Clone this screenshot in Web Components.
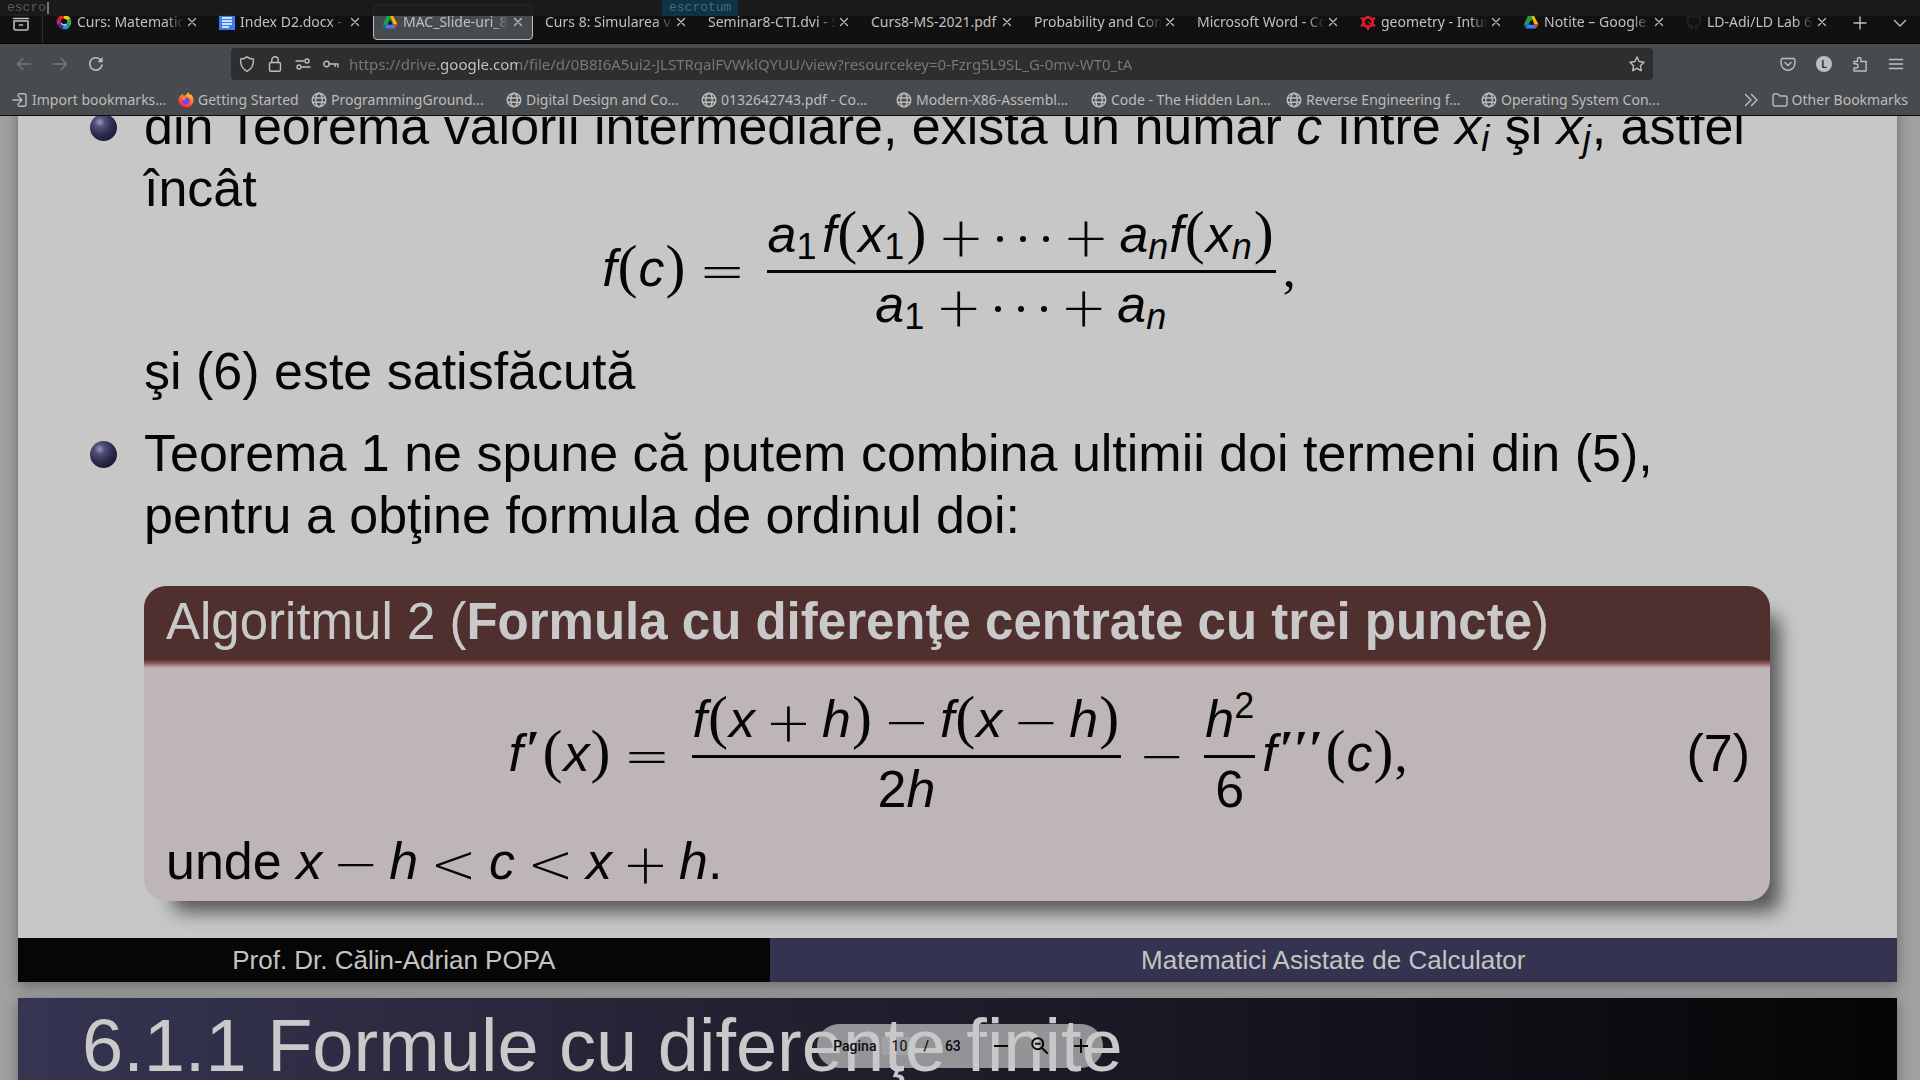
<!DOCTYPE html>
<html lang="ro">
<head>
<meta charset="utf-8">
<title>MAC_Slide-uri_8</title>
<style>
html,body{margin:0;height:100%}
body{display:flex;flex-direction:column;overflow:hidden;background:#a1a1a1;font-family:"Noto Sans",sans-serif;font-size:14px;color:#c0c0c0}
</style>
</head>
<body>
<launcher-bar></launcher-bar>
<tab-strip>
  <browser-tab icon="ring">Curs: Matematici</browser-tab>
  <browser-tab icon="doc">Index D2.docx - G</browser-tab>
  <browser-tab icon="drive" selected>MAC_Slide-uri_8</browser-tab>
  <browser-tab>Curs 8: Simularea va</browser-tab>
  <browser-tab>Seminar8-CTI.dvi - S</browser-tab>
  <browser-tab full>Curs8-MS-2021.pdf</browser-tab>
  <browser-tab>Probability and Com</browser-tab>
  <browser-tab>Microsoft Word - Co</browser-tab>
  <browser-tab icon="flower">geometry - Intuit</browser-tab>
  <browser-tab icon="drive">Notite – Google D</browser-tab>
  <browser-tab icon="github">LD-Adi/LD Lab 6</browser-tab>
</tab-strip>
<nav-bar></nav-bar>
<bookmark-bar>
  <book-mark icon="import" style="--w:166px">Import bookmarks…</book-mark>
  <book-mark icon="firefox" style="--w:133px">Getting Started</book-mark>
  <book-mark icon="globe">ProgrammingGround…</book-mark>
  <book-mark icon="globe">Digital Design and Co…</book-mark>
  <book-mark icon="globe">0132642743.pdf - Co…</book-mark>
  <book-mark icon="globe">Modern-X86-Assembl…</book-mark>
  <book-mark icon="globe">Code - The Hidden Lan…</book-mark>
  <book-mark icon="globe">Reverse Engineering f…</book-mark>
  <book-mark icon="globe">Operating System Con…</book-mark>
  <book-mark slot="end" icon="folder" style="--w:auto">Other Bookmarks</book-mark>
</bookmark-bar>
<pdf-viewer>
  <slide-page>
    <slide-item>din Teorema valorii intermediare, există un număr <i>c</i> între <i>x</i><math-sub>i</math-sub> şi <i>x</i><math-sub>j</math-sub>, astfel încât
      <math-display slot="after" class="list">
        <math-run><i>f</i><math-paren>(</math-paren><i>c</i><math-paren>)</math-paren><math-op class="rel">=</math-op></math-run>
        <math-frac>
          <math-run slot="num"><i>a</i><math-sub class="up">1</math-sub>&#8202;<i>f</i><math-paren>(</math-paren><i>x</i><math-sub class="up">1</math-sub><math-paren>)</math-paren><math-op>+</math-op><math-dots></math-dots><math-op>+</math-op><i>a</i><math-sub>n</math-sub><i>f</i><math-paren>(</math-paren><i>x</i><math-sub>n</math-sub><math-paren>)</math-paren></math-run>
          <math-run slot="den"><i>a</i><math-sub class="up">1</math-sub><math-op>+</math-op><math-dots></math-dots><math-op>+</math-op><i>a</i><math-sub>n</math-sub></math-run>
        </math-frac>
        <math-run><math-comma>,</math-comma></math-run>
      </math-display>
      <span slot="after">şi (6) este satisfăcută</span>
    </slide-item>
    <slide-item>Teorema 1 ne spune că putem combina ultimii doi termeni din (5), pentru a obţine formula de ordinul doi:</slide-item>
    <theorem-block>
      <span slot="title">Algoritmul 2 (<b>Formula cu diferenţe centrate cu trei puncte</b>)</span>
      <math-display class="block">
        <math-run><i>f</i><math-prime>′</math-prime><math-paren>(</math-paren><i>x</i><math-paren>)</math-paren><math-op class="rel">=</math-op></math-run>
        <math-frac>
          <math-run slot="num"><i>f</i><math-paren>(</math-paren><i>x</i><math-op>+</math-op><i>h</i><math-paren>)</math-paren><math-op>−</math-op><i>f</i><math-paren>(</math-paren><i>x</i><math-op>−</math-op><i>h</i><math-paren>)</math-paren></math-run>
          <math-run slot="den">2<i>h</i></math-run>
        </math-frac>
        <math-run><math-op>−</math-op></math-run>
        <math-frac>
          <math-run slot="num"><i>h</i><math-sup>2</math-sup></math-run>
          <math-run slot="den">6</math-run>
        </math-frac>
        <math-run><i>f</i><math-prime>′′′</math-prime><math-paren>(</math-paren><i>c</i><math-paren>)</math-paren><math-comma>,</math-comma></math-run>
        <math-run slot="number">(7)</math-run>
      </math-display>
      <div>unde <i>x</i><math-op>−</math-op><i>h</i><math-op class="rel">&lt;</math-op><i>c</i><math-op class="rel">&lt;</math-op><i>x</i><math-op>+</math-op><i>h</i>.</div>
    </theorem-block>
    <slide-footer slot="footer">
      <span slot="author">Prof. Dr. Călin-Adrian POPA</span>
      <span slot="course">Matematici Asistate de Calculator</span>
    </slide-footer>
  </slide-page>
  <title-page>6.1.1 Formule cu diferenţe finite</title-page>
  <page-controls slot="controls"></page-controls>
</pdf-viewer>
<script>
const svg=(w,h,vb,body)=>`<svg width="${w}" height="${h}" viewBox="${vb}" fill="none" stroke="currentColor" stroke-width="1.4" stroke-linecap="round" stroke-linejoin="round" aria-hidden="true">${body}</svg>`;
const i16=b=>svg(16,16,'0 0 16 16',b);
const ICONS={
 ring:i16('<g stroke-width="4" stroke-linecap="butt"><path stroke="#e2d211" d="M8 2.8A5.2 5.2 0 0 1 12.6 5.6"/><path stroke="#3fae49" d="M12.6 5.6A5.2 5.2 0 0 1 12.4 10.8"/><path stroke="#1a9ad6" d="M12.4 10.8A5.2 5.2 0 0 1 7 13.1"/><path stroke="#3a2f8f" d="M7 13.1A5.2 5.2 0 0 1 3.2 10"/><path stroke="#d6187c" d="M3.2 10A5.2 5.2 0 0 1 3.6 5.2"/><path stroke="#e3261f" d="M3.6 5.2A5.2 5.2 0 0 1 8 2.8"/></g><circle cx="8" cy="8" r="3.200" fill="#111" stroke="none"/><path stroke="#ddd" d="M5.500 9.500A3 3 0 0 0 10 10.200"/>'),
 doc:i16('<path fill="#3b7ded" stroke="none" d="M0 0h16v16H0z"/><path stroke="#fff" stroke-width="1.6" stroke-linecap="butt" d="M3 4h10M3 7h10M3 10h10M3 13h7"/>'),
 drive:i16('<g stroke="none"><path fill="#1e9e4a" d="M5.3 1h2.9l2 3.5L3.5 14 .8 10.500z"/><path fill="#f5b400" d="M8 1h2.700l4.800 9.500h-4.200z"/><path fill="#3b7ded" d="M4.600 10.500h7.500L13 14.500H3z"/><path fill="#e5402f" d="M11.300 10.500h4.200L13 14.500z"/><path fill="#2260c8" d="M.8 10.500h3.800L3 14.500z"/><path fill="#111" d="M8 6l2.500 4.500h-5z"/></g>'),
 flower:i16('<g stroke="#d3202a" stroke-width="2.600"><circle cx="8" cy="8" r="4.800"/><path d="M8 .9v3M8 12v3M1.900 4.500l2.600 1.500M11.500 10l2.600 1.500M1.900 11.500L4.500 10M11.500 6l2.600-1.500"/></g><path stroke="#d3202a" d="M8 8l3 2"/>'),
 github:i16('<path stroke="#1c2329" stroke-width="2" d="M6 15v-3.200C2.500 11.500 1.500 9 1.800 6.500 1.900 4 3 2 4 1.500L6 2.500h4l2-1c1 .5 2 2.500 2.200 5 .2 2.500-.7 5-4.200 5.300V15M6 13.500c-2 .5-2.500-.5-3.500-1.500"/>'),
 import:i16('<path d="M6 4V3.500A2 2 0 0 1 8 1.700h4a2 2 0 0 1 2 2v8.600a2 2 0 0 1-2 2H8a2 2 0 0 1-2-1.800V12M1 8h8.500M7 5l3 3-3 3"/>'),
 firefox:i16('<defs><linearGradient id="g" x1=".8" y1="0" x2=".2" y2="1"><stop offset="0" stop-color="#ffe226"/><stop offset=".45" stop-color="#ff7139"/><stop offset="1" stop-color="#f01361"/></linearGradient></defs><path fill="url(#g)" stroke="none" d="M11 .2c-.6 1.600.8 2.300 1.300 3.100.3-.5.200-1 .1-1.300 2 1.500 3.300 4 3.100 6.700A7.500 7.500 0 0 1 .6 9C.4 6.500 1.200 4.400 2.400 3c0 .6.100 1 .3 1.300C3.200 3 4 2 4.700 1.500c0 1 .4 1.900 1.300 2.300C8.500 3.500 8.500 1.500 11 .2z"/><circle cx="8" cy="8.800" r="3.500" fill="#7542e5" stroke="none"/><path fill="#ff9a22" stroke="none" d="M4 6c1.500-.8 3.500-.3 4.500.5-1 .2-2 .7-2 1.500-1 0-2-.6-2.500-2z"/>'),
 globe:i16('<circle cx="8" cy="8" r="6.800"/><ellipse cx="8" cy="8" rx="3.200" ry="6.800"/><path d="M1.500 6h13M1.500 10.200h13"/>'),
 folder:i16('<path d="M1 12.500v-9A1.500 1.500 0 0 1 2.500 2H6l2 2h5.500A1.500 1.500 0 0 1 15 5.500v7a1.500 1.500 0 0 1-1.500 1.500h-11A1.500 1.500 0 0 1 1 12.500z"/>'),
 x:svg(10,10,'0 0 10 10','<path stroke-width="1.200" d="M1.500 1.500l7 7M8.500 1.500l-7 7"/>'),
 vault:svg(18,18,'0 0 18 18','<path stroke-width="1.600" d="M3 1.200h12M1.500 4.500h15M2 7v7.500A1.500 1.500 0 0 0 3.500 16h11a1.500 1.500 0 0 0 1.500-1.500V7zM7.500 11h3"/>'),
 plus:svg(14,14,'0 0 14 14','<path d="M7 1v12M1 7h12"/>'),
 down:svg(14,14,'0 0 14 14','<path d="M1.500 4.500L7 10l5.500-5.500"/>'),
 back:i16('<path d="M14.500 8h-13M7 2.500L1.500 8 7 13.500"/>'),
 fwd:i16('<path d="M1.500 8h13M9 2.500L14.500 8 9 13.500"/>'),
 reload:i16('<path stroke-width="1.600" d="M14 9a6.200 6.200 0 1 1-2-5.700L13.500 5"/><path fill="currentColor" stroke="none" d="M14.600 1v5.200H9.400z"/>'),
 shield:i16('<path d="M8 .9C10 2.500 12 3 14.300 3c.6 5-1.300 9.800-6.300 12.300C3 12.800 1.100 8 1.700 3 4 3 6 2.500 8 .9z"/>'),
 lock:i16('<rect x="2.500" y="6.500" width="11" height="8.800" rx="1.500"/><path d="M4.800 6.500V4a3.200 3.200 0 0 1 6.400 0v2.500"/>'),
 perms:i16('<circle cx="12" cy="5" r="2"/><path d="M1 5h7.500M7.500 11H15"/><circle cx="4" cy="11" r="2"/>'),
 key:i16('<circle cx="3.500" cy="8" r="2.700"/><path d="M6.200 8H15v3M12 8v2.500"/>'),
 star:i16('<path d="M8 1l2.100 4.500 4.900.7-3.600 3.500.9 5L8 12.300l-4.300 2.400.9-5L1 6.200l4.900-.7z"/>'),
 pocket:i16('<path d="M2.500 2.500h11A1.300 1.300 0 0 1 14.800 4v3.500a6.800 6.800 0 0 1-13.600 0V4a1.300 1.300 0 0 1 1.300-1.500zM5 6.500l3 3 3-3"/>'),
 ext:i16('<path d="M2 7.500V5.500h3.500V3.200a1.700 1.700 0 0 1 3.400 0v2.300h5.200V15H2v-3h2a2 2 0 0 0 0-4z"/>'),
 menu:i16('<path d="M1.500 3.500h13M1.500 8h13M1.500 12.500h13"/>'),
 more:svg(14,14,'0 0 14 14','<path d="M1.500 1.500L7 7l-5.500 5.500M7.500 1.500L13 7l-5.500 5.500"/>'),
 zoomout:svg(18,18,'0 0 18 18','<g stroke-width="2" stroke-linecap="butt"><circle cx="6.700" cy="6.700" r="5.500"/><path d="M10.800 10.800l6 6M4 6.700h5.400"/></g>'),
 minus:svg(14,14,'0 0 14 14','<path stroke-width="2" stroke-linecap="butt" d="M0 7h14"/>'),
 zplus:svg(14,14,'0 0 14 14','<path stroke-width="2" stroke-linecap="butt" d="M0 7h14M7 0v14"/>')
};
const BTN='button{appearance:none;border:0;background:none;color:inherit;font:inherit;padding:0;margin:0;display:flex;align-items:center;justify-content:center}svg{display:block;flex:none}';
const define=(name,css,html)=>customElements.define(name,class extends HTMLElement{
  connectedCallback(){
    if(this.shadowRoot)return;
    const body=typeof html==='function'?html(this):html;
    this.attachShadow({mode:'open'}).innerHTML=`<style>${css}</style>${body}`;
  }
});

define('launcher-bar',`:host{position:absolute;inset:0 0 auto 0;height:16px;z-index:5;display:flex;align-items:center;background:rgba(27,27,27,.94);color:#5a5a5a;font:13px/16px "Liberation Mono",monospace}
label{display:flex;align-items:center;flex:0 0 662px;box-sizing:border-box;padding-left:7px}
input{border:0;padding:0;margin:0;background:none;color:inherit;font:inherit;width:40px;height:16px;outline:0}
.caret{width:2px;height:12px;background:#777}
output{background:#0d3344;color:#4b6975;padding:0 7px;height:16px}`,
`<label aria-label="Run"><input value="escro"><span class="caret"></span></label><output>escrotum</output>`);

define('tab-strip',BTN+`:host{display:flex;align-items:stretch;height:43px;background:#111;border-bottom:1px solid #060606;flex:none}
.vault{width:43px;border-right:1px solid #303030;padding-top:2px}
.tabs{flex:1;display:flex;padding-left:4px;min-width:0}
.end{width:80px;display:flex}.end button{flex:1;height:45px}`,
`<button class="vault" aria-label="View">${ICONS.vault}</button><div class="tabs" role="tablist"><slot></slot></div><div class="end"><button aria-label="New tab">${ICONS.plus}</button><button aria-label="List tabs">${ICONS.down}</button></div>`);

define('browser-tab',BTN+`:host{flex:1 1 0;min-width:0;display:flex;padding:4px 3px 3px 0}
.tab{flex:1;min-width:0;display:flex;align-items:center;gap:3px;padding:0 9px 0 8px;border:1px solid transparent;border-radius:4px}
:host([selected]) .tab{background:#484b4d;border-color:#bdbdbd}
.text{flex:1;min-width:0;overflow:hidden;white-space:nowrap;text-align:left;line-height:20px;-webkit-mask-image:linear-gradient(90deg,#000 calc(100% - 18px),transparent 100%)}
:host([full]) .text{-webkit-mask-image:none}
.icon{margin-right:2px}`,
el=>`<div class="tab" role="tab">${el.getAttribute('icon')?`<span class="icon">${ICONS[el.getAttribute('icon')]}</span>`:''}<span class="text"><slot></slot></span><button aria-label="Close">${ICONS.x}</button></div>`);

define('nav-bar',BTN+`:host{display:flex;align-items:center;height:40px;padding:0 6px;background:#484b4d;flex:none;color:#bebebe}
button{width:36px;height:36px}
button.off{color:#777a7c}
.url{flex:1;min-width:0;display:flex;align-items:center;height:32px;margin:0 117px;background:#2d2e30;border-radius:4px;padding:0 8px;gap:12px}
.url button{width:16px}
.url button:nth-of-type(4){margin-right:-2px}
input{flex:1;min-width:0;border:0;padding:0;margin:0;outline:0;font:inherit;font-size:15px;height:24px;color:transparent;-webkit-text-fill-color:transparent;background:linear-gradient(90deg,#77797a 89px,#c6c6c6 89px,#c6c6c6 169px,#77797a 169px);-webkit-background-clip:text;background-clip:text}
.me{width:16px;height:16px;border-radius:50%;background:#bebebe;color:#333;font-size:10px;font-weight:700;line-height:16px;text-align:center}`,
`<button class="off" aria-label="Back">${ICONS.back}</button><button class="off" aria-label="Forward">${ICONS.fwd}</button><button aria-label="Reload">${ICONS.reload}</button>
<div class="url"><button aria-label="Protection">${ICONS.shield}</button><button aria-label="Secure">${ICONS.lock}</button><button aria-label="Permissions">${ICONS.perms}</button><button aria-label="Key">${ICONS.key}</button><input aria-label="Address" value="https://drive.google.com/file/d/0B8I6A5ui2-JLSTRqalFVWklQYUU/view?resourcekey=0-Fzrg5L9SL_G-0mv-WT0_tA"><button aria-label="Bookmark">${ICONS.star}</button></div>
<button aria-label="Pocket">${ICONS.pocket}</button><button aria-label="Account"><span class="me">L</span></button><button aria-label="Extensions">${ICONS.ext}</button><button aria-label="Menu">${ICONS.menu}</button>`);

define('bookmark-bar',BTN+`:host{display:flex;align-items:center;height:31px;padding:0 12px;background:#484b4d;border-bottom:1px solid #0c0c0c;flex:none}
nav{display:flex;flex:1;min-width:0}
button{margin-right:14px}`,
`<nav><slot></slot></nav><button aria-label="More">${ICONS.more}</button><slot name="end"></slot>`);
define('book-mark',`:host{display:block;width:var(--w,195px)}a{display:flex;align-items:center;gap:4px;color:#bcbcbc;text-decoration:none;white-space:nowrap;line-height:20px}svg{display:block}`,
el=>`<a href="#">${ICONS[el.getAttribute('icon')]}<slot></slot></a>`);

define('pdf-viewer',`:host{position:relative;flex:1;min-height:0;display:block;overflow:hidden;background:#a1a1a1}
.pages{display:flex;flex-direction:column;gap:16px;margin:-21px 23px 0 18px}
.controls{position:absolute;bottom:12px;left:0;right:0;display:flex;justify-content:center}`,
`<div class="pages"><slot></slot></div><div class="controls"><slot name="controls"></slot></div>`);
define('slide-page',`:host{display:block;background:#c7c7c7;color:#060606;font:52px/62px "Liberation Sans",sans-serif;box-shadow:0 4px 14px rgba(0,0,0,.35)}
.body{padding:0 127px 37px 126px}`,
`<div class="body"><slot></slot></div><slot name="footer"></slot>`);
define('slide-item',`:host{display:block;margin-bottom:20px;position:relative;padding-right:16px}
p{margin:0}
.dot{position:absolute;left:-54px;top:19px;width:27px;height:27px;border-radius:50%;background:radial-gradient(circle at 36% 30%,#9a9ac0 0,#50507c 20%,#2e2e50 48%,#1c1c30 75%,#26263c 100%)}`,
`<span class="dot"></span><p><slot></slot></p><slot name="after"></slot>`);
define('theorem-block',`:host{display:block;margin-top:40px;border-radius:22px;background:#beb5b6;box-shadow:19px 20px 18px -9px rgba(0,0,0,.56)}
header{padding:5px 22px 7px;border-radius:22px 22px 0 0;background:#50302f;color:#c9c9c9;font-size:51px}
.fade{height:8px;background:linear-gradient(#5e3433,#8a5253 35%,#beb5b6)}
.body{padding:35px 20px 9px 22px}`,
`<header><slot name="title"></slot></header><div class="fade"></div><div class="body"><slot></slot></div>`);
define('slide-footer',`:host{display:flex;font:26px/44px "Liberation Sans",sans-serif;color:#c4c4c4;text-align:center}
div{flex:2 1 0;background:#060606}div+div{flex:3 1 0;background:#353450}`,
`<div><slot name="author"></slot></div><div><slot name="course"></slot></div>`);
define('title-page',`:host{display:block;height:500px;box-sizing:border-box;padding:8px 64px;background:linear-gradient(90deg,#363552,#21202f 42%,#12111a 74%,#050505);color:#c9c9c9;font:74px/80px "Liberation Sans",sans-serif;white-space:nowrap;box-shadow:0 4px 14px rgba(0,0,0,.35)}`,`<slot></slot>`);

define('math-display',`:host{display:flex;justify-content:center;align-items:center;line-height:28px}
:host(.list){margin:1px 0 15px}:host(.block){margin:2px 0 20px}
.side{flex:1 1 0;display:flex;justify-content:flex-end}
:host(.list) .side{display:none}`,
`<span class="side"></span><slot></slot><span class="side"><slot name="number"></slot></span>`);
define('math-run',`:host{display:block;white-space:nowrap;padding-bottom:10px;line-height:28px}:host([slot=num]),:host([slot=den]){padding:0}`,`<slot></slot>`);
define('math-frac',`:host{display:flex;flex-direction:column;align-items:center;margin:0 7px 0 9px}
.n,.d{height:50px;display:flex}.d{align-items:flex-start;padding-top:17px;height:35px}hr{align-self:stretch;border:0;height:3px;margin:0;background:#060606}.n slot,.d slot{display:block}.n{padding:0 1px}`,
`<div class="n"><slot name="num"></slot></div><hr><div class="d"><slot name="den"></slot></div>`);
define('math-paren',`:host{display:inline-block;width:22px;text-align:center;font:60px/0 "Liberation Serif",serif}`,`<slot></slot>`);
define('math-op',`:host{display:inline-block;width:47px;margin:0 10px;text-align:center;vertical-align:-4px;font:200 56px/0 "DejaVu Sans",sans-serif}:host(.rel){margin:0 12px}`,`<slot></slot>`);
define('math-dots',`:host{display:inline-flex;width:52px;margin:0 3px;justify-content:space-between;vertical-align:10px;line-height:0}i{width:6px;height:6px;border-radius:50%;background:#060606}`,`<i></i><i></i><i></i>`);
define('math-sub',`:host{font-size:36px;line-height:0;vertical-align:-7px;font-style:italic;margin-right:1px}:host(.up){font-style:normal}`,`<slot></slot>`);
define('math-sup',`:host{font-size:36px;line-height:0;vertical-align:19px}`,`<slot></slot>`);
define('math-prime',`:host{font:italic 700 52px/0 "Liberation Serif",serif;vertical-align:4px;margin:0 2px}`,`<slot></slot>`);
define('math-comma',`:host{font:52px/0 "Liberation Serif",serif}`,`<slot></slot>`);

define('page-controls',BTN+`:host{display:flex;align-items:center;box-sizing:border-box;height:44px;border-radius:22px;padding:0 15px 0 16px;background:rgba(200,200,200,.7);color:#0a0a0a;font:500 14px/20px Roboto,sans-serif}
label{display:flex;align-items:center;gap:6px}
input{width:34px;height:18px;box-sizing:border-box;border:0;padding:0;background:rgba(200,200,200,.25);color:inherit;font:400 14px/18px Roboto,sans-serif;text-align:center}
.sl{margin:0 16px 0 7px}.sep{width:1px;height:44px;background:rgba(90,90,90,.4);margin:0 14px 0 18px}
button{width:14px;height:32px}.z{width:18px;margin:0 25px 0 23px}`,
`<label>Pagina<input value="10"></label><span class="sl">/</span><span>63</span><span class="sep"></span><button aria-label="Zoom out">${ICONS.minus}</button><button class="z" aria-label="Reset zoom">${ICONS.zoomout}</button><button aria-label="Zoom in">${ICONS.zplus}</button>`);
</script>
</body>
</html>
